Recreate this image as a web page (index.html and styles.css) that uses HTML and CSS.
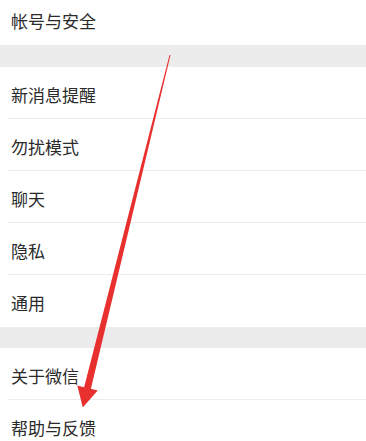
FILE: index.html
```html
<!DOCTYPE html>
<html lang="zh">
<head>
<meta charset="utf-8">
<link rel="stylesheet" href="styles.css">
</head>
<body>
<div class="page">
  <div class="group group-top">
    <div class="row"><span class="label">帐号与安全</span></div>
  </div>
  <div class="gap"></div>
  <div class="group">
    <div class="row"><span class="label">新消息提醒</span></div>
    <div class="row"><span class="label">勿扰模式</span></div>
    <div class="row"><span class="label">聊天</span></div>
    <div class="row"><span class="label">隐私</span></div>
    <div class="row"><span class="label">通用</span></div>
  </div>
  <div class="gap gap-2"></div>
  <div class="group">
    <div class="row"><span class="label">关于微信</span></div>
    <div class="row"><span class="label">帮助与反馈</span></div>
  </div>
</div>
<svg class="arrow" width="366" height="441" viewBox="0 0 366 441">
  <polygon points="169.5,54.9 170.5,55.1 90.9,388.8 97.7,390.4 82.8,407.5 77.3,385.6 84.1,387.2" fill="#e8302f"/>
</svg>
</body>
</html>
```
FILE: styles.css
```css
html, body {
  margin: 0;
  padding: 0;
  background: #ffffff;
  overflow: hidden;
}
body {
  width: 366px;
  height: 441px;
  position: relative;
  font-family: "Noto Sans CJK SC", "Noto Sans", sans-serif;
}
.page {
  margin-top: -7px;
}
.group {
  background: #ffffff;
}
.row {
  height: 52px;
  padding-left: 11px;
  display: flex;
  align-items: center;
  position: relative;
  box-sizing: border-box;
}
.row::after {
  content: "";
  position: absolute;
  left: 8px;
  right: 0;
  bottom: 0;
  height: 1px;
  background: #ececec;
}
.row:last-child::after {
  display: none;
}
.label {
  font-size: 17px;
  color: #2a2a2a;
  line-height: 1;
  padding-top: 2px;
}
.gap {
  height: 22px;
  background: #ececec;
}
.gap-2 {
  height: 21px;
}
.arrow {
  position: absolute;
  left: 0;
  top: 0;
  pointer-events: none;
}
```
